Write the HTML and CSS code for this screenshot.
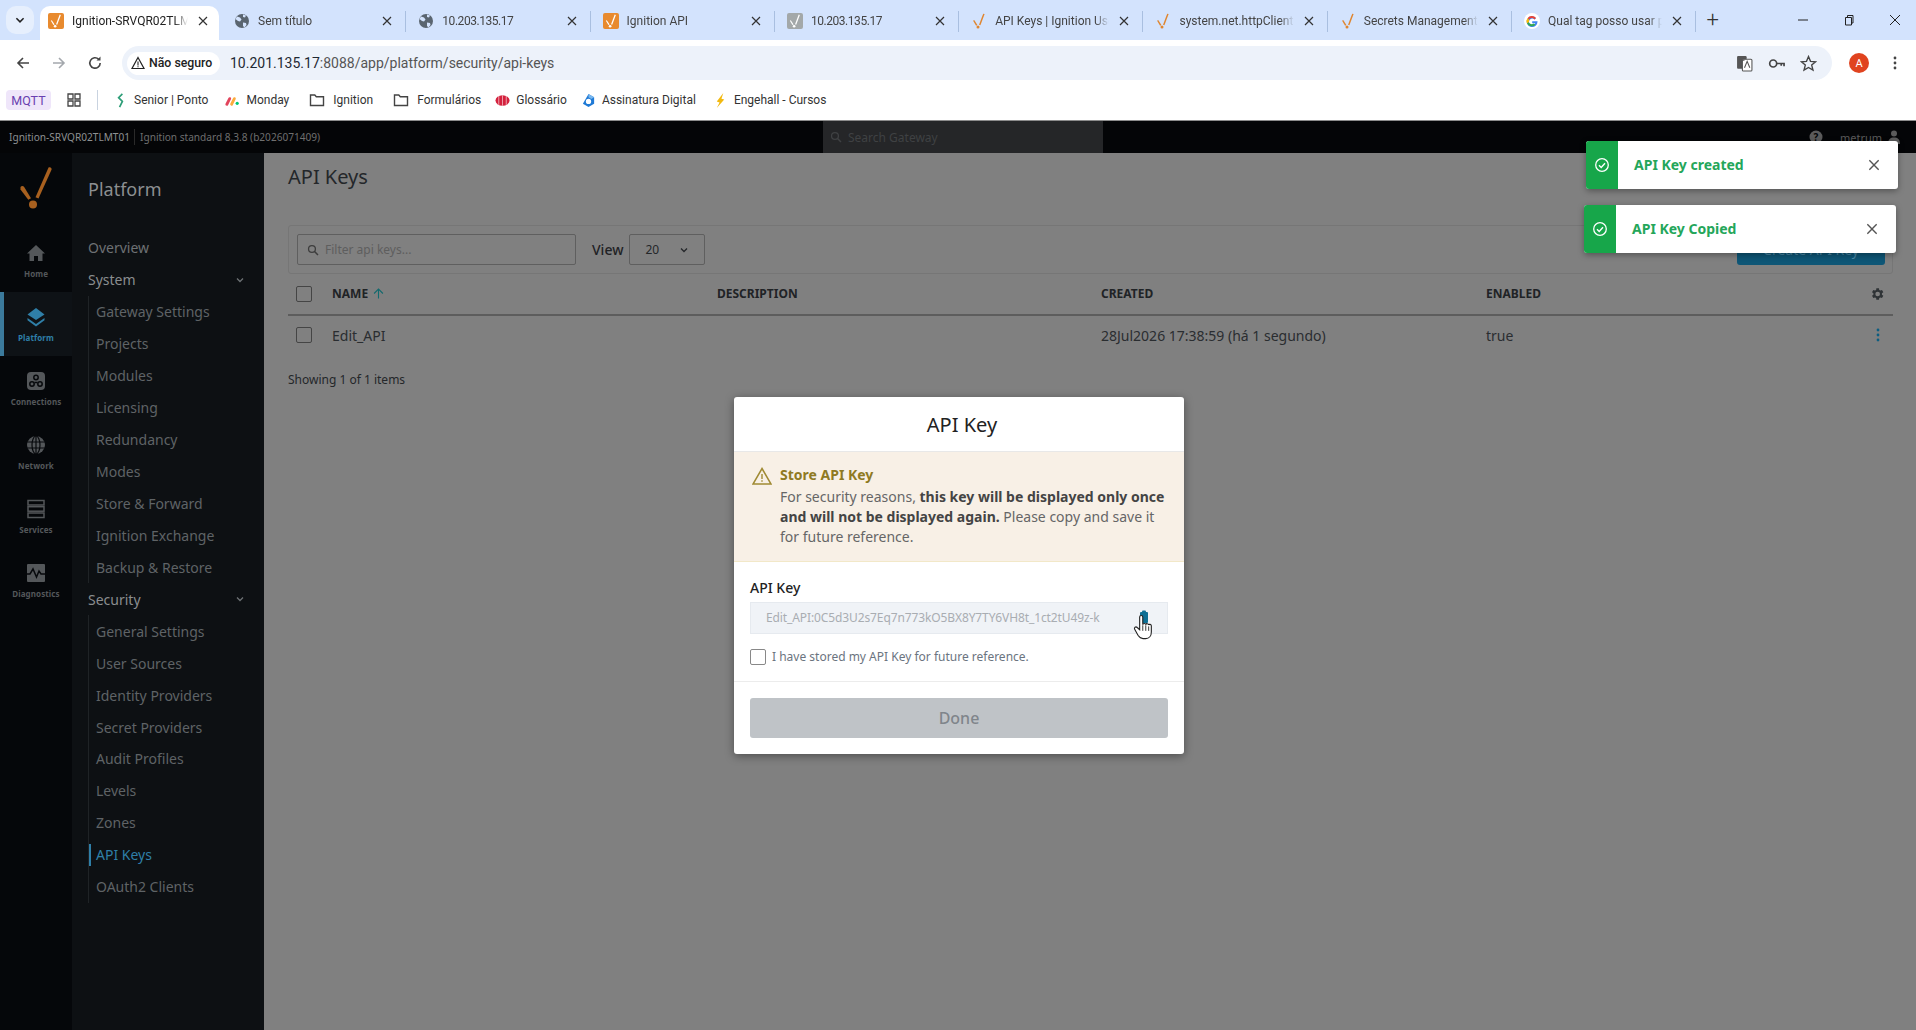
FILE: index.html
```html
<!DOCTYPE html>
<html lang="pt-BR">
<head>
<meta charset="utf-8">
<title>API Keys</title>
<link rel="stylesheet" href="styles.css">
</head>
<body>
<svg class="defs" width="0" height="0" aria-hidden="true">
  <defs>
    <symbol id="spark" viewBox="0 0 16 16"><path d="M13.600 1 9.400 12.200 8 11.800 12.200.7z" fill="currentColor"/><path d="M3.200 7 6.400 12 5.100 12.700 2.100 7.800z" fill="currentColor"/><circle cx="7" cy="14" r="1.500" fill="currentColor"/></symbol>
    <symbol id="x" viewBox="0 0 12 12"><path d="M2 2l8 8M10 2l-8 8" stroke="currentColor" stroke-width="1.200" fill="none"/></symbol>
    <symbol id="globe" viewBox="0 0 16 16"><circle cx="8" cy="8" r="7" fill="currentColor"/><path d="M3 3.500l3 1 1.500 2L6 8.500 4 8 1.500 6zM9 9.500l3 .5 .5 2-2 2.500-1.500-1.500zM9 1.500l3 1-1 2-2-.5z" fill="#d3e3fd"/></symbol>
    <symbol id="chev" viewBox="0 0 10 10"><path d="M2 3.500l3 3 3-3" stroke="currentColor" stroke-width="1.300" fill="none"/></symbol>
    <symbol id="folder" viewBox="0 0 16 16"><path d="M1.500 3h4.300l1.500 1.700h7.200v8.800h-13z" fill="none" stroke="currentColor" stroke-width="1.400"/></symbol>
    <symbol id="search" viewBox="0 0 14 14"><circle cx="5.800" cy="5.800" r="4" fill="none" stroke="currentColor" stroke-width="1.500"/><path d="M8.800 8.800l4 4" stroke="currentColor" stroke-width="1.800"/></symbol>
    <symbol id="check" viewBox="0 0 16 16"><circle cx="8" cy="8" r="6.300" fill="none" stroke="currentColor" stroke-width="1.300"/><path d="M5 8.200l2.200 2.200L11 6.200" fill="none" stroke="currentColor" stroke-width="1.400"/></symbol>
  </defs>
</svg>

<header class="browser">
  <div class="tabstrip">
    <button class="tabmenu"><svg class="ic10"><use href="#chev"/></svg></button>
    <div class="tab tab-active">
      <span class="fav fav-orange"><svg class="fav-in"><use href="#spark"/></svg></span>
      <span class="tab-title">Ignition-SRVQR02TLMT01</span>
      <svg class="tab-x"><use href="#x"/></svg>
    </div>
    <div class="tab">
      <svg class="fav fav-globe"><use href="#globe"/></svg>
      <span class="tab-title">Sem título</span>
      <svg class="tab-x"><use href="#x"/></svg>
    </div>
    <div class="tab">
      <svg class="fav fav-globe"><use href="#globe"/></svg>
      <span class="tab-title tab-ip">10.203.135.17</span>
      <svg class="tab-x"><use href="#x"/></svg>
    </div>
    <div class="tab">
      <span class="fav fav-orange"><svg class="fav-in"><use href="#spark"/></svg></span>
      <span class="tab-title">Ignition API</span>
      <svg class="tab-x"><use href="#x"/></svg>
    </div>
    <div class="tab">
      <span class="fav fav-gray"><svg class="fav-in"><use href="#spark"/></svg></span>
      <span class="tab-title tab-ip">10.203.135.17</span>
      <svg class="tab-x"><use href="#x"/></svg>
    </div>
    <div class="tab">
      <svg class="fav fav-spark"><use href="#spark"/></svg>
      <span class="tab-title">API Keys | Ignition User Manual</span>
      <svg class="tab-x"><use href="#x"/></svg>
    </div>
    <div class="tab">
      <svg class="fav fav-spark"><use href="#spark"/></svg>
      <span class="tab-title">system.net.httpClient</span>
      <svg class="tab-x"><use href="#x"/></svg>
    </div>
    <div class="tab">
      <svg class="fav fav-spark"><use href="#spark"/></svg>
      <span class="tab-title">Secrets Management</span>
      <svg class="tab-x"><use href="#x"/></svg>
    </div>
    <div class="tab">
      <svg class="fav" viewBox="0 0 16 16"><circle cx="8" cy="8" r="8" fill="#fff"/><path d="M13.500 8.200H8.200v2h3.100a3.300 3.300 0 1 1-.8-3.800l1.500-1.500A5.400 5.400 0 1 0 13.500 8.200z" fill="#4285f4"/><path d="M3.500 5.200 5.200 6.500A3.300 3.300 0 0 1 10.500 6.400l1.500-1.500A5.400 5.400 0 0 0 3.500 5.200z" fill="#ea4335"/><path d="M3 10.600 4.800 9.300a3.300 3.300 0 0 0 .1-2.800L3.300 5.300a5.400 5.400 0 0 0-.3 5.300z" fill="#fbbc05"/><path d="M3 10.600a5.400 5.400 0 0 0 8.400 1.200L9.800 10.500a3.300 3.300 0 0 1-5-1.200z" fill="#34a853"/></svg>
      <span class="tab-title">Qual tag posso usar para</span>
      <svg class="tab-x"><use href="#x"/></svg>
    </div>
    <span class="newtab">+</span>
    <div class="winctl">
      <svg class="win" viewBox="0 0 12 12"><path d="M1 6h10" stroke="#222" fill="none"/></svg>
      <svg class="win" viewBox="0 0 12 12"><path d="M2.500 3.500h6v7.500h-6zM4.500 3.500V1.500h5.500v7.500H8.500" stroke="#222" fill="none"/></svg>
      <svg class="win" viewBox="0 0 12 12"><path d="M1 1l10 10M11 1L1 11" stroke="#222" fill="none"/></svg>
    </div>
  </div>

  <div class="toolbar">
    <svg class="navbtn" viewBox="0 0 16 16"><path d="M14 8H3M8 3 3 8l5 5" fill="none" stroke="#444" stroke-width="1.600"/></svg>
    <svg class="navbtn" viewBox="0 0 16 16"><path d="M2 8h11M8 3l5 5-5 5" fill="none" stroke="#a4a8ad" stroke-width="1.600"/></svg>
    <svg class="navbtn" viewBox="0 0 16 16"><path d="M13.200 8a5.200 5.200 0 1 1-1.500-3.700" fill="none" stroke="#444" stroke-width="1.600"/><path d="M13.500 1.500v4h-4z" fill="#444"/></svg>
    <div class="omnibox">
      <div class="secure">
        <svg class="ic14" viewBox="0 0 14 14"><path d="M7 1.500 13 12.500H1z" fill="none" stroke="#222" stroke-width="1.200"/><path d="M7 5.500v4M7 10.300v1" stroke="#222" stroke-width="1.100"/></svg>
        <span>Não seguro</span>
      </div>
      <span class="url"><span class="url-host">10.201.135.17</span>:8088/app/platform/security/api-keys</span>
      <div class="omni-right">
        <svg class="omni-ic" viewBox="0 0 16 16"><rect x="1" y="1" width="9" height="12" rx="1" fill="#555"/><rect x="6" y="4" width="9" height="11" rx="1" fill="#fff" stroke="#555"/><path d="M3 5h5M5.500 4v1.500M8 12l2.500-6 2.500 6" fill="none" stroke="#555"/></svg>
        <svg class="omni-ic" viewBox="0 0 18 16"><circle cx="5.500" cy="8" r="3.700" fill="none" stroke="#444" stroke-width="1.800"/><path d="M9 8h8v3M14 8v2.500" fill="none" stroke="#444" stroke-width="1.800"/></svg>
        <svg class="omni-ic" viewBox="0 0 16 16"><path d="M8 1.500 9.900 6l4.800.4-3.700 3.100 1.200 4.700L8 11.700 3.800 14.200 5 9.500 1.300 6.400 6.100 6z" fill="none" stroke="#444" stroke-width="1.300"/></svg>
      </div>
    </div>
    <span class="avatar">A</span>
    <svg class="dots" viewBox="0 0 4 16"><circle cx="2" cy="3" r="1.400" fill="#444"/><circle cx="2" cy="8" r="1.400" fill="#444"/><circle cx="2" cy="13" r="1.400" fill="#444"/></svg>
  </div>

  <nav class="bookmarks">
    <span class="mqtt">MQTT</span>
    <svg class="apps" viewBox="0 0 14 14"><path d="M1 1h5v5H1zM8 1h5v5H8zM1 8h5v5H1zM8 8h5v5H8z" fill="none" stroke="#444" stroke-width="1.300"/></svg>
    <span class="bm-sep"></span>
    <a class="bm"><svg class="bm-ic" viewBox="0 0 16 16"><path d="M10 1 6 5l4 4-3 6" fill="none" stroke="#2e9e78" stroke-width="1.800"/></svg>Senior | Ponto</a>
    <a class="bm bm-wide"><svg class="bm-ic" viewBox="0 0 16 16"><path d="M2 12 5 6" stroke="#e2445c" stroke-width="3" stroke-linecap="round"/><path d="M7 12l3-6" stroke="#fdab3d" stroke-width="3" stroke-linecap="round"/><circle cx="13" cy="11" r="1.700" fill="#00c875"/></svg>Monday</a>
    <a class="bm bm-dir bm-wide"><svg class="bm-folder"><use href="#folder"/></svg>Ignition</a>
    <a class="bm bm-dir bm-tight"><svg class="bm-folder"><use href="#folder"/></svg>Formulários</a>
    <a class="bm bm-tight"><svg class="bm-ic" viewBox="0 0 16 16"><ellipse cx="8" cy="8" rx="7.500" ry="5.500" fill="#d4213d"/><path d="M4 3v10M8 2.500v11M12 3v10" stroke="#fff" stroke-width=".6"/></svg>Glossário</a>
    <a class="bm"><svg class="bm-ic" viewBox="0 0 16 16"><path d="M8 1l6 3.500v7L8 15l-6-3.500z" fill="#1f7ad6"/><circle cx="8" cy="9" r="2.800" fill="#fff"/><path d="M8 1l6 3.500-3 2-3-2z" fill="#7ab8ef"/></svg>Assinatura Digital</a>
    <a class="bm"><svg class="bm-ic" viewBox="0 0 16 16"><path d="M11 0 4 9l3 1-3 6 8-9-3-1z" fill="#f2b90f"/></svg>Engehall - Cursos</a>
  </nav>
</header>

<div class="app">
  <div class="topbar">
    <span class="gw-name">Ignition-SRVQR02TLMT01</span>
    <span class="gw-ver">Ignition standard 8.3.8 (b2026071409)</span>
    <div class="gw-search"><svg class="ic12"><use href="#search"/></svg>Search Gateway</div>
    <div class="gw-user">
      <svg class="ic14" viewBox="0 0 14 14"><circle cx="7" cy="7" r="6.500" fill="#5b5b5b"/><text class="help-q" x="7" y="10.500" text-anchor="middle">?</text></svg>
      <span class="gw-username">metrum</span>
      <svg class="ic14" viewBox="0 0 14 14"><circle cx="7" cy="3.500" r="3" fill="#5b5b5b"/><path d="M1 14c0-5 2.500-6.500 6-6.500s6 1.500 6 6.500z" fill="#5b5b5b"/></svg>
    </div>
  </div>

  <div class="workspace">
    <aside class="rail">
      <div class="rail-logo">
        <svg class="logo" viewBox="0 0 34 44"><path d="M29.500 1.500c1.800-.9 3.500.4 3 2.200L19.500 32.500l-3-1.200z" fill="#a8601f"/><path d="M1.500 21c1.200-1.400 3-1.100 3.800.2l6.700 11-2.700 1.600L1.500 23.500z" fill="#a8601f"/><circle cx="14" cy="38.500" r="4" fill="#a8601f"/></svg>
      </div>
      <div class="rail-item">
        <svg class="rail-ic" viewBox="0 0 20 20"><path d="M10 2 1 10.500h2.500V18h4.500v-5h4v5h4.500v-7.500H19z" fill="currentColor"/></svg>
        <span>Home</span>
      </div>
      <div class="rail-item rail-active">
        <svg class="rail-ic" viewBox="0 0 20 20"><path d="M10 1 18.500 7.500 10 13 1.500 7.500z" fill="currentColor"/><path d="M1.500 11 10 17l8.500-6 0 2.200L10 19.500 1.500 13.200z" fill="currentColor"/></svg>
        <span>Platform</span>
      </div>
      <div class="rail-item">
        <svg class="rail-ic" viewBox="0 0 20 20"><rect x="1" y="1" width="18" height="18" rx="4" fill="currentColor"/><g fill="none" stroke="#07090c" stroke-width="1.500"><circle cx="10" cy="6.500" r="2.200"/><circle cx="6" cy="13" r="2.200"/><circle cx="14" cy="13" r="2.200"/><path d="M8.500 11.500h3"/></g></svg>
        <span>Connections</span>
      </div>
      <div class="rail-item">
        <svg class="rail-ic" viewBox="0 0 20 20"><circle cx="10" cy="10" r="9" fill="currentColor"/><g fill="none" stroke="#07090c" stroke-width="1.200"><ellipse cx="10" cy="10" rx="4" ry="9"/><path d="M1 7h18M1 13h18M10 1v18"/></g></svg>
        <span>Network</span>
      </div>
      <div class="rail-item">
        <svg class="rail-ic" viewBox="0 0 20 20"><g fill="none" stroke="currentColor" stroke-width="1.500"><rect x="2" y="1.500" width="16" height="4.500"/><rect x="2" y="7.700" width="16" height="4.500"/><rect x="2" y="14" width="16" height="4.500"/></g></svg>
        <span>Services</span>
      </div>
      <div class="rail-item">
        <svg class="rail-ic" viewBox="0 0 20 20"><rect x="1" y="1" width="18" height="18" rx="1" fill="currentColor"/><path d="M1 11h3l3-5 3.500 8L13 8l2 3h4" fill="none" stroke="#07090c" stroke-width="1.500"/></svg>
        <span>Diagnostics</span>
      </div>
    </aside>

    <nav class="sidenav">
      <h2 class="nav-title">Platform</h2>
      <a class="nav-row nav-plain">Overview</a>
      <a class="nav-row nav-group">System<svg class="ic10"><use href="#chev"/></svg></a>
      <div class="nav-sub">
        <a class="nav-row">Gateway Settings</a>
        <a class="nav-row">Projects</a>
        <a class="nav-row">Modules</a>
        <a class="nav-row">Licensing</a>
        <a class="nav-row">Redundancy</a>
        <a class="nav-row">Modes</a>
        <a class="nav-row">Store &amp; Forward</a>
        <a class="nav-row">Ignition Exchange</a>
        <a class="nav-row">Backup &amp; Restore</a>
      </div>
      <a class="nav-row nav-group">Security<svg class="ic10"><use href="#chev"/></svg></a>
      <div class="nav-sub">
        <a class="nav-row">General Settings</a>
        <a class="nav-row">User Sources</a>
        <a class="nav-row">Identity Providers</a>
        <a class="nav-row">Secret Providers</a>
        <a class="nav-row">Audit Profiles</a>
        <a class="nav-row">Levels</a>
        <a class="nav-row">Zones</a>
        <a class="nav-row nav-current">API Keys</a>
        <a class="nav-row">OAuth2 Clients</a>
      </div>
    </nav>

    <main class="main">
      <h1 class="page-title">API Keys</h1>
      <div class="filterbar">
        <div class="filter-input"><svg class="ic12"><use href="#search"/></svg><span>Filter api keys...</span></div>
        <span class="view-label">View</span>
        <div class="view-select"><span>20</span><svg class="ic10"><use href="#chev"/></svg></div>
        <button class="create-btn">Create API Key</button>
      </div>
      <div class="row row-head">
        <span class="cb"></span>
        <span class="name-head">NAME <svg class="sort-arrow" viewBox="0 0 10 10"><path d="M5 9.500V1M1 5 5 1 9 5" fill="none" stroke="#136a6e" stroke-width="1"/></svg></span>
        <span>DESCRIPTION</span>
        <span>CREATED</span>
        <span>ENABLED</span>
        <svg class="gear" viewBox="0 0 24 24"><path d="M19.400 13a7.500 7.500 0 0 0 0-2l2.100-1.600-2-3.500-2.500 1a7.500 7.500 0 0 0-1.700-1L15 3.200h-4L10.700 5.900a7.500 7.500 0 0 0-1.700 1l-2.500-1-2 3.500L6.600 11a7.500 7.500 0 0 0 0 2l-2.100 1.600 2 3.500 2.500-1a7.500 7.500 0 0 0 1.700 1l.3 2.700h4l.3-2.700a7.500 7.500 0 0 0 1.700-1l2.500 1 2-3.500zM13 15.500a3.500 3.500 0 1 1 0-7 3.500 3.500 0 0 1 0 7z" fill="#2f3336"/></svg>
      </div>
      <div class="row row-body">
        <span class="cb"></span>
        <span>Edit_API</span>
        <span></span>
        <span>28Jul2026 17:38:59 (há 1 segundo)</span>
        <span>true</span>
        <svg class="kebab" viewBox="0 0 4 14"><circle cx="2" cy="2" r="1.400" fill="#0d5d80"/><circle cx="2" cy="7" r="1.400" fill="#0d5d80"/><circle cx="2" cy="12" r="1.400" fill="#0d5d80"/></svg>
      </div>
      <p class="showing">Showing 1 of 1 items</p>
    </main>
  </div>

  <div class="toast toast-a">
    <span class="toast-ic"><svg class="ic16"><use href="#check"/></svg></span>
    <span class="toast-text">API Key created</span>
    <svg class="toast-x"><use href="#x"/></svg>
  </div>
  <div class="toast toast-b">
    <span class="toast-ic"><svg class="ic16"><use href="#check"/></svg></span>
    <span class="toast-text">API Key Copied</span>
    <svg class="toast-x"><use href="#x"/></svg>
  </div>

  <section class="modal">
    <h2 class="modal-title">API Key</h2>
    <div class="warn">
      <svg class="warn-ic" viewBox="0 0 20 18"><path d="M10 1.500 19 17H1z" fill="none" stroke="#a08a33" stroke-width="1.500"/><path d="M10 7v5M10 13.200v1.500" stroke="#a08a33" stroke-width="1.400"/></svg>
      <div class="warn-body">
        <strong class="warn-head">Store API Key</strong>
        <p class="warn-text">For security reasons, <b>this key will be displayed only once and will not be displayed again.</b> Please copy and save it for future reference.</p>
      </div>
    </div>
    <div class="modal-form">
      <label class="key-label">API Key</label>
      <div class="key-input">
        <span>Edit_API:0C5d3U2s7Eq7n773kO5BX8Y7TY6VH8t_1ct2tU49z-k</span>
        <svg class="copy-ic" viewBox="0 0 10 14"><rect x="1" y="2" width="8" height="11" rx="1" fill="#0d6f95"/><rect x="3" y="0.500" width="4" height="3" rx="1" fill="#0d6f95"/></svg>
      </div>
      <label class="stored"><span class="cb cb-light"></span>I have stored my API Key for future reference.</label>
    </div>
    <div class="modal-foot"><button class="done-btn">Done</button></div>
    <svg class="hand" viewBox="0 0 18 24"><path d="M6 2.500c0-1.800 2.800-1.800 2.800 0v7c.3-1.500 2.500-1.500 2.700 0 .3-1.300 2.400-1.300 2.600.3.400-1 2.300-.8 2.400.7v5.500c0 3.500-2 6-5 6H9c-2.500 0-3.500-1.500-4.500-3L1.500 13.500c-.8-1.500 1-2.800 2.300-1.500L6 14z" fill="#fff" stroke="#222" stroke-width="1"/><path d="M8.800 10v5M11.500 10v5M14.100 11v4" stroke="#222" stroke-width=".8"/></svg>
  </section>
</div>
</body>
</html>
```
FILE: styles.css
```css
* { box-sizing: border-box; }
html, body { margin: 0; height: 100%; overflow: hidden; }
body { font-family: "Noto Sans", sans-serif; background: #808080; width: 1916px; height: 1030px; position: relative; }
.defs { position: absolute; }
svg { display: block; flex: none; }
button { font: inherit; border: 0; padding: 0; }
h1, h2, p { margin: 0; font-weight: 400; }

.ic10 { width: 10px; height: 10px; }
.ic12 { width: 12px; height: 12px; }
.ic14 { width: 14px; height: 14px; }
.ic16 { width: 16px; height: 16px; }

/* browser */
.browser { font-family: Roboto, sans-serif; background: #fff; height: 120px; }
.tabstrip { height: 40px; background: #d3e3fd; display: flex; align-items: flex-start; padding: 6px 0 0 6px; position: relative; }
.tabmenu { width: 28px; height: 28px; border-radius: 10px; background: #e6effd; display: flex; align-items: center; justify-content: center; color: #222; margin-right: 6px; }
.tabmenu .ic10 { width: 12px; height: 12px; }
.tab { width: 184.3px; height: 29px; display: flex; align-items: center; padding-left: 12px; position: relative; color: #444; font-size: 12px; }
.tab::after { content: ""; position: absolute; right: 0; top: 5px; height: 21px; width: 1px; background: #a9bfe0; }
.tab-active { width: 179px; height: 34px; margin-right: 3px; padding: 0 0 5px 8px; background: #fff; border-radius: 10px 10px 0 0; color: #222; }
.tab-active::after { display: none; }
.fav { width: 16px; height: 16px; margin-right: 8px; display: flex; align-items: center; justify-content: center; }
.fav-orange { background: #e88a2e; color: #fff; border-radius: 2px; }
.fav-gray { background: #a3a8a9; color: #fff; border-radius: 2px; }
.fav-in { width: 14px; height: 14px; }
.fav-globe { color: #5a6570; }
.fav-spark { color: #e0852e; }
.tab-title { flex: 1; min-width: 0; white-space: nowrap; overflow: hidden; -webkit-mask-image: linear-gradient(to right, #000 88%, transparent); mask-image: linear-gradient(to right, #000 88%, transparent); }
.tab-ip { letter-spacing: -.45px; }
.tab-x { width: 12px; height: 12px; margin: 0 13px 0 9px; color: #333; }
.tab-active .tab-x { margin-right: 10px; }
.newtab { font-size: 22px; font-weight: 300; color: #333; line-height: 28px; margin-left: 10px; }
.winctl { position: absolute; top: 14px; right: 15px; display: flex; gap: 34px; }
.win { width: 12px; height: 12px; }

.toolbar { height: 40px; display: flex; align-items: center; padding: 6px 0 0 15px; }
.navbtn { width: 16px; height: 16px; margin-right: 20px; }
.omnibox { margin-left: -1px; width: 1710px; height: 34px; border-radius: 17px; background: #edf2fa; display: flex; align-items: center; padding-left: 5px; }
.secure { height: 23px; padding: 0 6px 0 4px; width: 93px; background: #fff; border-radius: 12px; display: flex; align-items: center; gap: 4px; font-size: 12.3px; font-weight: 500; color: #222; white-space: nowrap; }
.url { margin-left: 10px; font-size: 14px; color: #555; }
.url-host { color: #1f2933; }
.omni-right { margin-left: auto; display: flex; align-items: center; gap: 15px; padding-right: 15px; }
.omni-ic { width: 17px; height: 17px; }
.avatar { width: 20px; height: 20px; border-radius: 50%; background: #e0431f; color: #fff; font-size: 11px; display: flex; align-items: center; justify-content: center; margin-left: 17px; }
.dots { width: 4px; height: 16px; margin-left: 24px; }

.bookmarks { height: 40px; display: flex; align-items: center; padding-left: 6px; font-size: 12px; color: #333; white-space: nowrap; }
.mqtt { width: 45px; height: 20px; background: #efe6fa; color: #6a3fb0; border-radius: 4px; display: flex; align-items: center; justify-content: center; font-size: 12.5px; }
.apps { width: 14px; height: 14px; margin-left: 16px; }
.bm-sep { width: 1px; height: 20px; background: #c9d3e0; margin: 0 15px 0 16px; }
.bm { display: flex; align-items: center; gap: 6px; margin-right: 17px; }
.bm-wide { margin-right: 20px; }
.bm-tight { margin-right: 14px; }
.bm-dir { gap: 8px; }
.bm-ic { width: 15px; height: 15px; }
.bm-folder { color: #444; width: 16px; height: 16px; }

/* gateway */
.app { height: 910px; display: flex; flex-direction: column; position: relative; }
.topbar { height: 33px; background: #040507; border-top: 1px solid #8c8c8c; display: flex; align-items: center; padding-left: 9px; font-size: 10.1px; color: #6f6f6f; position: relative; }
.gw-name { color: #8d9092; padding-right: 4px; border-right: 1px solid #2a2a2a; line-height: 16px; }
.gw-ver { padding-left: 5px; }
.gw-search { position: absolute; left: 823px; top: 0; bottom: 0; width: 280px; background: #252628; display: flex; align-items: center; gap: 6px; padding-left: 7px; color: #3f4143; font-size: 12px; }
.gw-user { position: absolute; left: 1809px; top: 0; bottom: 0; display: flex; align-items: center; gap: 17px; color: #5b5b5b; font-size: 11px; }
.gw-username { margin-right: -12px; }
.help-q { fill: #040507; font-size: 10px; font-weight: 700; }

.workspace { flex: 1; display: flex; min-height: 0; }
.rail { width: 72px; background: #05070a; flex: none; }
.rail-logo { height: 75px; display: flex; align-items: center; justify-content: center; padding-bottom: 6px; }
.logo { width: 34px; height: 44px; }
.rail-item { height: 64px; display: flex; flex-direction: column; align-items: center; justify-content: center; gap: 5px; color: #54575a; font-size: 8px; font-weight: 700; padding-top: 2px; letter-spacing: .1px; }
.rail-ic { width: 20px; height: 20px; }
.rail-active { background: #0e1216; border-left: 4px solid #3b7a9c; padding-right: 4px; color: #2f7fa8; }

.sidenav { width: 192px; flex: none; background: #0d1013; padding: 24px 0 0 16px; font-size: 14px; color: #5f6366; }
.nav-title { font-size: 18px; line-height: 24px; color: #8c8f91; height: 55px; }
.nav-row { height: 31.95px; display: flex; align-items: center; white-space: nowrap; }
.nav-plain { color: #6d7174; }
.nav-group { color: #8a8d8f; justify-content: space-between; padding-right: 19px; }
.nav-group .ic10 { color: #6d7174; }
.nav-sub { border-left: 1px solid #1f2326; padding-left: 7px; }
.nav-current { color: #2f7fa8; position: relative; }
.nav-current::before { content: ""; position: absolute; left: -7px; top: 5px; bottom: 5px; width: 2px; background: #2f7fa8; }

.main { flex: 1; background: #808080; padding: 12px 23px 0 24px; color: #2a2d30; font-size: 14px; min-width: 0; }
.page-title { font-size: 20px; line-height: 24px; color: #24272a; height: 60px; }
.filterbar { height: 49px; border: 1px solid #767676; border-radius: 3px; display: flex; align-items: center; padding: 0 7px 0 8px; }
.filter-input { width: 279px; height: 31px; border: 1px solid #5f5f5f; border-radius: 2px; display: flex; align-items: center; gap: 6px; padding-left: 9px; font-size: 12px; color: #5e5e5e; }
.filter-input .ic12 { color: #3d3d3d; }
.view-label { margin: 0 6px 0 16px; font-weight: 500; color: #1f2225; }
.view-select { width: 76px; height: 31px; border: 1px solid #5f5f5f; border-radius: 2px; display: flex; align-items: center; justify-content: space-between; padding: 0 15px; font-size: 12px; color: #24272a; }
.create-btn { margin-left: auto; width: 148px; height: 31px; background: #0e5676; color: #4a88a5; border-radius: 3px; font-size: 14px; }
.row { display: grid; grid-template-columns: 44px 385px 384px 385px 1fr 22px; align-items: center; }
.row-head { height: 42px; padding-bottom: 1px; border-bottom: 2px solid #5d5d5d; font-size: 12px; font-weight: 700; color: #202326; }
.row-body { height: 38px; }
.cb { width: 16px; height: 16px; border: 1.5px solid #454545; border-radius: 2px; margin-left: 8px; display: block; }
.name-head { display: flex; align-items: center; gap: 5px; }
.sort-arrow { width: 11px; height: 11px; }
.gear { width: 16px; height: 16px; margin-left: -2px; }
.kebab { width: 4px; height: 14px; margin-left: 5px; }
.showing { font-size: 12px; margin-top: 17px; line-height: 17px; color: #24272a; }

/* toasts */
.toast { position: absolute; width: 312px; height: 48px; background: #fff; border-radius: 3px; box-shadow: 0 2px 6px rgba(0,0,0,.35); display: flex; align-items: center; overflow: hidden; }
.toast-a { left: 1586px; top: 21px; }
.toast-b { left: 1584px; top: 85px; }
.toast-ic { width: 32px; height: 100%; background: #17a64a; color: #fff; display: flex; align-items: center; justify-content: center; }
.toast-text { flex: 1; margin-left: 16px; font-size: 14px; font-weight: 700; color: #24a65a; padding-bottom: 2px; }
.toast-x { width: 14px; height: 14px; margin-right: 17px; color: #555; }

/* modal */
.modal { position: absolute; left: 734px; top: 277px; width: 450px; height: 357px; background: #fff; border-radius: 3px; box-shadow: 0 2px 10px rgba(0,0,0,.4); display: flex; flex-direction: column; }
.modal-title { height: 55px; font-size: 20px; line-height: 55px; text-align: center; color: #222; padding-left: 6px; border-bottom: 1px solid #e8e8e8; }
.warn { height: 110px; background: #f8f0e6; border-bottom: 1px solid #f2e8c8; display: flex; padding: 13px 18px 0 18px; gap: 8px; }
.warn-ic { width: 20px; height: 18px; margin-top: 2px; }
.warn-body { flex: 1; font-size: 14px; }
.warn-head { display: block; line-height: 20px; color: #8f7a22; font-weight: 700; }
.warn-text { line-height: 20px; color: #666; margin-top: 2px; }
.warn-text b { color: #444; font-weight: 700; }
.modal-form { flex: 1; padding: 16px 16px 0; border-bottom: 1px solid #ececec; }
.key-label { display: block; font-size: 14px; font-weight: 500; line-height: 20px; color: #222; }
.key-input { height: 32px; margin-top: 4px; background: #f0f3f7; border: 1px solid #e6eaef; display: flex; align-items: center; justify-content: space-between; padding: 0 18px 2px 15px; font-size: 12px; letter-spacing: -.11px; color: #a9adb2; }
.copy-ic { width: 10px; height: 14px; }
.stored { display: flex; align-items: center; gap: 6px; margin-top: 14px; font-size: 12px; color: #6b7480; }
.cb-light { margin-left: 0; border-color: #888; }
.modal-foot { height: 72px; padding: 16px 16px 0; }
.done-btn { width: 418px; height: 40px; background: #bfc3c7; color: #7f858b; border-radius: 3px; font-size: 16px; font-weight: 500; }
.hand { position: absolute; left: 399px; top: 217px; width: 20px; height: 27px; }
```
